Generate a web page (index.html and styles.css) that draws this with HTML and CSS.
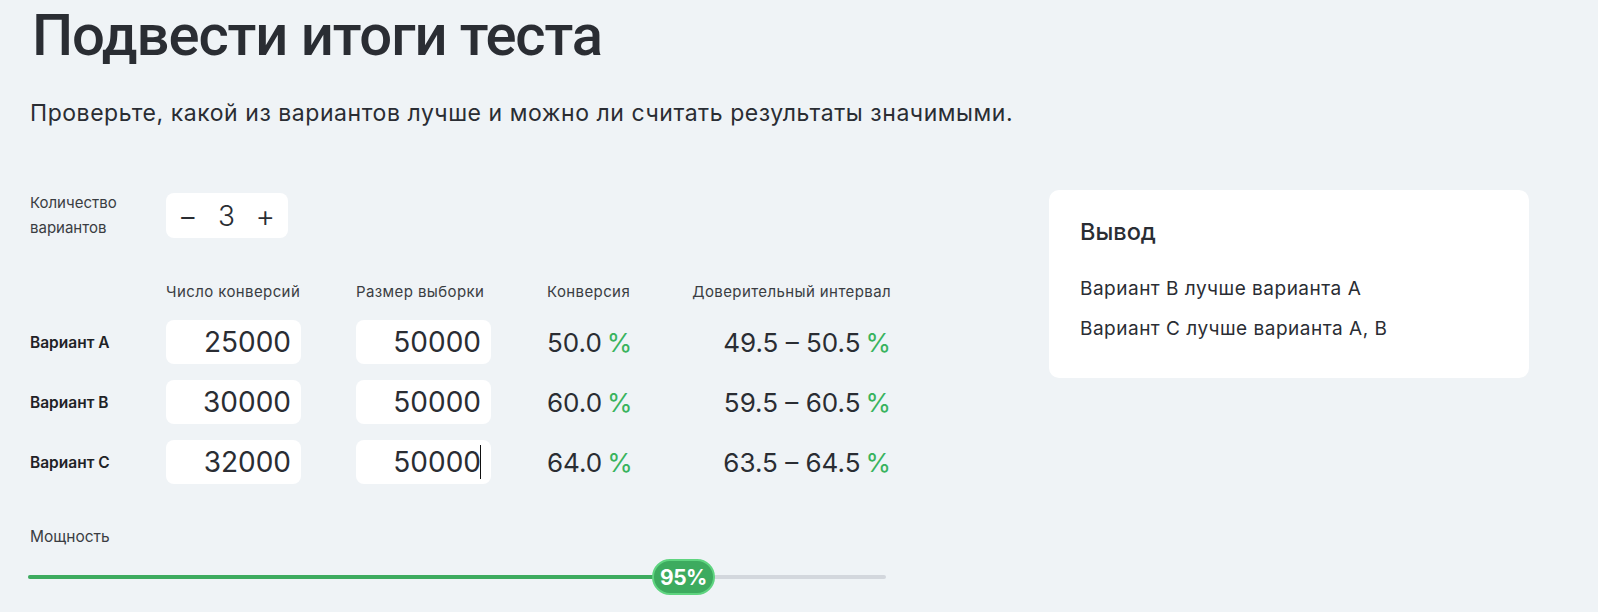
FILE: index.html
```html
<!DOCTYPE html>
<html lang="ru">
<head>
<meta charset="utf-8">
<title>Подвести итоги теста</title>
<link rel="stylesheet" href="styles.css">
</head>
<body>
<div class="page">
  <h1 class="title">Подвести итоги теста</h1>
  <p class="subtitle">Проверьте, какой из вариантов лучше и можно ли считать результаты значимыми.</p>
  <div class="main">
    <div class="calc">
      <div class="count-row">
        <div class="count-label">Количество<br>вариантов</div>
        <div class="stepper">
          <span class="step-btn">−</span>
          <span class="step-val">3</span>
          <span class="step-btn">+</span>
        </div>
      </div>
      <div class="grid">
        <div></div>
        <div class="head">Число конверсий</div>
        <div class="head">Размер выборки</div>
        <div class="head">Конверсия</div>
        <div class="head right">Доверительный интервал</div>

        <div class="rowlabel">Вариант A</div>
        <div class="cell"><div class="input">25000</div></div>
        <div class="cell"><div class="input">50000</div></div>
        <div class="val">50.0<span class="pct">%</span></div>
        <div class="val right">49.5 – 50.5<span class="pct">%</span></div>

        <div class="rowlabel">Вариант B</div>
        <div class="cell"><div class="input">30000</div></div>
        <div class="cell"><div class="input">50000</div></div>
        <div class="val">60.0<span class="pct">%</span></div>
        <div class="val right">59.5 – 60.5<span class="pct">%</span></div>

        <div class="rowlabel">Вариант C</div>
        <div class="cell"><div class="input">32000</div></div>
        <div class="cell"><div class="input focused">50000<span class="caret"></span></div></div>
        <div class="val">64.0<span class="pct">%</span></div>
        <div class="val right">63.5 – 64.5<span class="pct">%</span></div>
      </div>
      <div class="power">
        <div class="power-label">Мощность</div>
        <div class="slider">
          <div class="track">
            <div class="fill"></div>
          </div>
          <div class="thumb">95%</div>
        </div>
      </div>
    </div>
    <div class="card">
      <div class="card-title">Вывод</div>
      <div class="card-line">Вариант B лучше варианта A</div>
      <div class="card-line">Вариант C лучше варианта A, B</div>
    </div>
  </div>
</div>
</body>
</html>
```

FILE: styles.css
```css
* { box-sizing: border-box; }
html, body { margin: 0; padding: 0; }
body {
  background: #eff3f6;
  color: #2a2d33;
  font-family: Inter, "Noto Sans", sans-serif;
  width: 1598px;
  height: 612px;
  overflow: hidden;
}
.page { padding: 0 30px 0 30px; }
.title {
  margin: 0;
  font-family: Roboto, "Liberation Sans", sans-serif;
  font-weight: 500;
  font-size: 58px;
  line-height: 70px;
  letter-spacing: -1.1px;
  padding-left: 2px;
}
.subtitle {
  margin: 28px 0 0 0;
  font-size: 23px;
  line-height: 30px;
  font-weight: 400;
  letter-spacing: 0.55px;
}
.main {
  display: flex;
  align-items: flex-start;
  margin-top: 62px;
}
.calc { width: 861px; }
.count-row {
  display: flex;
  align-items: flex-start;
}
.count-label {
  width: 136px;
  font-size: 15px;
  line-height: 25px;
  color: #3a3d42;
}
.stepper {
  margin-top: 3px;
  width: 122px;
  height: 45px;
  background: #fff;
  border-radius: 8px;
  display: flex;
  align-items: center;
  justify-content: space-between;
  padding: 0 13px 0 12px;
  font-size: 28px;
  font-weight: 300;
}
.step-btn { font-size: 30px; line-height: 1; font-weight: 300; }
.step-val { font-weight: 300; line-height: 1; }
.grid {
  display: grid;
  grid-template-columns: 136px 190px 191px 120px 224px;
  grid-template-rows: 22px 44px 44px 44px;
  row-gap: 16px;
  margin-top: 42px;
}
.grid > .head {
  font-size: 15px;
  color: #3a3d42;
  line-height: 20px;
  letter-spacing: 0.4px;
  white-space: nowrap;
}
.grid > .head.right { text-align: right; }
.rowlabel {
  font-size: 15.5px;
  font-weight: 600;
  display: flex;
  align-items: center;
  color: #1f2226;
}
.cell { display: flex; }
.input {
  width: 135px;
  height: 44px;
  background: #fff;
  border-radius: 8px;
  font-size: 28px;
  display: flex;
  align-items: center;
  justify-content: flex-end;
  padding-right: 10px;
  position: relative;
}
.caret {
  position: absolute;
  right: 10px;
  top: 5px;
  width: 1px;
  height: 34px;
  background: #111;
}
.val {
  font-size: 26px;
  display: flex;
  align-items: center;
  font-weight: 400;
}
.val.right { justify-content: flex-end; }
.pct { color: #39b35e; margin-left: 5px; }
.power { margin-top: 43px; }
.power-label { font-size: 15.5px; color: #3a3d42; line-height: 20px; }
.slider {
  position: relative;
  height: 36px;
  margin-top: 12px;
  width: 858px;
  margin-left: -2px;
}
.track {
  position: absolute;
  left: 0; right: 0;
  top: 16px;
  height: 4px;
  border-radius: 2px;
  background: #d3d7dd;
}
.fill {
  width: 626px;
  height: 4px;
  border-radius: 2px;
  background: #3dab5f;
}
.thumb {
  position: absolute;
  left: 624px;
  top: 0;
  width: 63px;
  height: 36px;
  border-radius: 18px;
  background: #3dab5f;
  border: 2px solid #5fd480;
  color: #fff;
  font-weight: 700;
  font-size: 21px;
  display: flex;
  align-items: center;
  justify-content: center;
  letter-spacing: -0.5px;
}
.card {
  margin-left: 158px;
  width: 480px;
  height: 188px;
  background: #fff;
  border-radius: 10px;
  padding: 27px 31px;
}
.card-title {
  font-size: 23.5px;
  font-weight: 500;
  line-height: 30px;
  margin-bottom: 22px;
}
.card-line {
  font-size: 19px;
  line-height: 40px;
  letter-spacing: 0.5px;
}
```
